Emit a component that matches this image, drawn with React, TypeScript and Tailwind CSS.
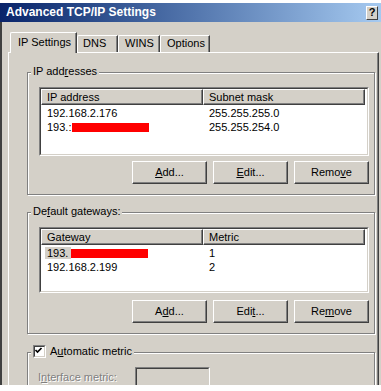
import React from 'react';

type Row = { cells: React.ReactNode[]; redLeft?: number };

function GroupBox({ legend, className, children }: { legend: React.ReactNode; className: string; children: React.ReactNode }) {
  return (
    <div className={`relative border border-[#808080] shadow-[inset_1px_1px_0_#fff,1px_1px_0_#fff] ${className}`}>
      <div className="absolute top-[-8px] left-[3px] px-[2px] bg-[#d4d0c8] flex items-center">{legend}</div>
      {children}
    </div>
  );
}

function ListView({ cols, rows, className }: { cols: React.ReactNode[]; rows: Row[]; className: string }) {
  return (
    <div className={`border border-t-[#808080] border-l-[#808080] border-b-white border-r-white ${className}`}>
      <div className="h-full border border-t-[#404040] border-l-[#404040] border-b-[#d4d0c8] border-r-[#d4d0c8] bg-white">
        <div className="flex">
          {cols.map((c, i) => (
            <div
              key={i}
              className="w-[162px] h-[16px] bg-[#d4d0c8] border border-t-white border-l-white border-b-[#404040] border-r-[#404040] shadow-[inset_-1px_-1px_0_#808080] pl-[5px] pt-px"
            >
              {c}
            </div>
          ))}
        </div>
        <div className="pt-px">
          {rows.map((r, i) => (
            <div key={i} className="relative flex h-[14px] items-center">
              {r.cells.map((c, j) => (
                <div key={j} className="w-[162px] pl-[6px]">
                  {c}
                </div>
              ))}
              {r.redLeft !== undefined && (
                <span className="absolute top-[3px] h-[9px] w-[77px] bg-[#ff0000]" style={{ left: r.redLeft }} />
              )}
            </div>
          ))}
        </div>
      </div>
    </div>
  );
}

function Button({ children }: { children: React.ReactNode }) {
  return (
    <div className="w-[75px] h-[23px] flex items-center justify-center bg-[#d4d0c8] border border-t-white border-l-white border-b-[#404040] border-r-[#404040] shadow-[inset_-1px_-1px_0_#808080]">
      {children}
    </div>
  );
}

function Tab({ children, className }: { children: React.ReactNode; className: string }) {
  return (
    <div className={`bg-[#d4d0c8] border-t border-l border-white border-r border-r-[#404040] rounded-tl-[2px] shadow-[inset_-1px_0_0_#808080] ${className}`}>
      {children}
    </div>
  );
}

export default function App() {
  return (
    <div className="w-[381px] h-[391px] bg-white overflow-hidden font-['Liberation_Sans',Arial,sans-serif] text-[11px] leading-[13px] text-black">
      <div className="h-[3px]" />
      {/* title bar */}
      <div className="h-[19px] flex items-center justify-between bg-linear-to-r from-[#0a246a] to-[#a6caf0] pl-[6px] pr-[3px]">
        <span className="text-white font-bold text-[12px]">Advanced TCP/IP Settings</span>
        <div className="w-[12px] h-[14px] flex items-center justify-center bg-[#d4d0c8] border border-t-white border-l-white border-b-[#404040] border-r-[#404040] font-bold text-[11px]">
          ?
        </div>
      </div>

      <div className="h-[363px] bg-[#d4d0c8] border-l-2 border-[#404040] overflow-hidden">
        {/* tabs */}
        <div className="h-[20px] mt-[10px] pl-[8px] flex items-end">
          <Tab className="relative z-10 -mb-px w-[67px] h-[21px] pl-[7px] pt-[3px]">IP Settings</Tab>
          <Tab className="w-[41px] h-[17px] pl-[5px] pt-px">DNS</Tab>
          <Tab className="w-[42px] h-[17px] pl-[6px] pt-px">WINS</Tab>
          <Tab className="w-[50px] h-[17px] pl-[6px] pt-px">Options</Tab>
        </div>

        {/* tab page */}
        <div className="ml-[6px] w-[371px] h-[360px] border-t border-l border-white border-r border-r-[#404040] shadow-[inset_-1px_0_0_#808080] pl-[18px] pt-[19px]">
          <GroupBox
            className="w-[348px] h-[123px] pl-[11px] pt-[14px]"
            legend={<span>IP add<u>r</u>esses</span>}
          >
            <ListView
              className="w-[330px] h-[69px]"
              cols={['IP address', 'Subnet mask']}
              rows={[
                { cells: ['192.168.2.176', '255.255.255.0'] },
                { cells: ['193.:', '255.255.254.0'], redLeft: 31 },
              ]}
            />
            <div className="mt-[5px] w-[330px] flex justify-end gap-[6px]">
              <Button><span><u>A</u>dd...</span></Button>
              <Button><span><u>E</u>dit...</span></Button>
              <Button><span>Remo<u>v</u>e</span></Button>
            </div>
          </GroupBox>

          <GroupBox
            className="mt-[17px] w-[348px] h-[122px] pl-[11px] pt-[14px]"
            legend={<span>De<u>f</u>ault gateways:</span>}
          >
            <ListView
              className="w-[330px] h-[66px]"
              cols={['Gateway', 'Metric']}
              rows={[
                { cells: [<span className="bg-[#d4d0c8] pr-[3px] -ml-[2px] pl-[2px]">193.</span>, '1'], redLeft: 30 },
                { cells: ['192.168.2.199', '2'] },
              ]}
            />
            <div className="mt-[7px] w-[330px] flex justify-end gap-[6px]">
              <Button><span>A<u>d</u>d...</span></Button>
              <Button><span>Edi<u>t</u>...</span></Button>
              <Button><span>Re<u>m</u>ove</span></Button>
            </div>
          </GroupBox>

          <GroupBox
            className="mt-[18px] w-[348px] h-[60px] pl-[10px] pt-[14px]"
            legend={
              <div className="flex items-center gap-[4px]">
                <div className="w-[13px] h-[13px] border border-t-[#808080] border-l-[#808080] border-b-white border-r-white">
                  <div className="w-full h-full bg-white border border-t-[#404040] border-l-[#404040] border-b-[#d4d0c8] border-r-[#d4d0c8]">
                    <svg width="9" height="9" viewBox="0 0 9 9" className="block -mt-px -ml-px">
                      <path d="M1.5 4 L3.5 6 L7.5 2" fill="none" stroke="#000" strokeWidth="1.7" />
                    </svg>
                  </div>
                </div>
                <span>A<u>u</u>tomatic metric</span>
              </div>
            }
          >
            <div className="flex items-center">
              <span className="w-[97px] text-[#808080] [text-shadow:1px_1px_0_#fff]">
                I<u>n</u>terface metric:
              </span>
              <div className="w-[75px] h-[21px] border border-t-[#808080] border-l-[#808080] border-b-white border-r-white">
                <div className="w-full h-full border border-t-[#404040] border-l-[#404040] border-b-[#d4d0c8] border-r-[#d4d0c8] bg-[#d4d0c8]" />
              </div>
            </div>
          </GroupBox>
        </div>
      </div>
    </div>
  );
}
